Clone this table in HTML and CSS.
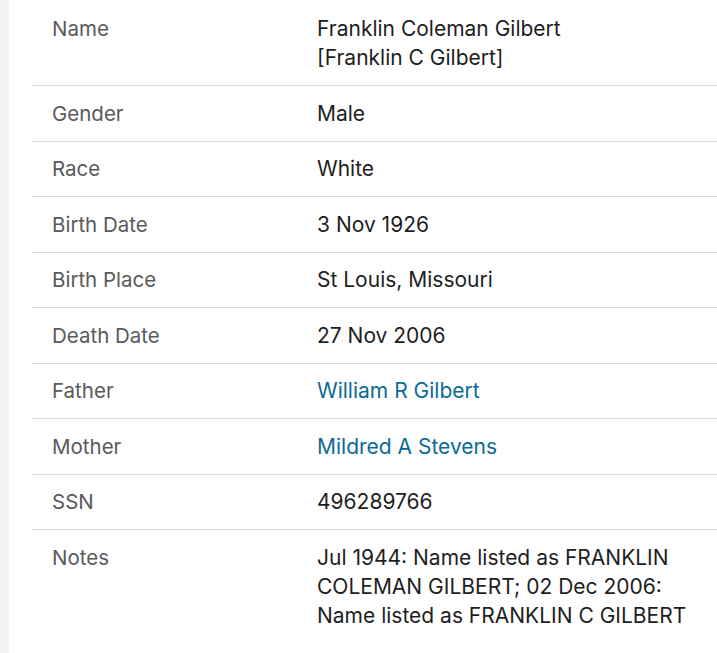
FILE: index.html
```html
<!DOCTYPE html>
<html>
<head>
<meta charset="utf-8">
<link rel="stylesheet" href="styles.css">
</head>
<body>
<div class="page">
  <div class="strip"></div>
  <div class="content">
    <table class="facts">
      <tr><th>Name</th><td>Franklin Coleman Gilbert<br>[Franklin C Gilbert]</td></tr>
      <tr><th>Gender</th><td>Male</td></tr>
      <tr><th>Race</th><td>White</td></tr>
      <tr><th>Birth Date</th><td>3 Nov 1926</td></tr>
      <tr><th>Birth Place</th><td>St Louis, Missouri</td></tr>
      <tr><th>Death Date</th><td>27 Nov 2006</td></tr>
      <tr><th>Father</th><td><a class="link" href="#">William R Gilbert</a></td></tr>
      <tr><th>Mother</th><td><a class="link" href="#">Mildred A Stevens</a></td></tr>
      <tr><th>SSN</th><td>496289766</td></tr>
      <tr><th>Notes</th><td>Jul 1944: Name listed as FRANKLIN COLEMAN GILBERT; 02 Dec 2006: Name listed as FRANKLIN C GILBERT</td></tr>
    </table>
  </div>
</div>
</body>
</html>
```
FILE: styles.css
```css
html, body {
  margin: 0;
  padding: 0;
  background: #ffffff;
}
body {
  font-family: Inter, "Liberation Sans", sans-serif;
  width: 717px;
  height: 653px;
  overflow: hidden;
}
.page {
  display: flex;
  height: 653px;
}
.strip {
  width: 9px;
  flex: none;
  background: #f3f3f0;
}
.content {
  flex: 1;
  padding-left: 23px;
  padding-top: 1.5px;
}
.facts {
  width: 100%;
  border-collapse: collapse;
}
.facts tr {
  border-bottom: 1px solid #dcdcdc;
}
.facts tr:last-child {
  border-bottom: none;
}
.facts th, .facts td {
  text-align: left;
  vertical-align: top;
  padding: 12.75px 0;
  line-height: 29px;
}
.facts th {
  width: 265px;
  padding-left: 20px;
  font-weight: 400;
  font-size: 20.5px;
  color: #5a5a5a;
}
.facts td {
  font-size: 21px;
  color: #1e1e1e;
  padding-right: 12px;
}
.link {
  color: #0c6a96;
  text-decoration: none;
}
```
